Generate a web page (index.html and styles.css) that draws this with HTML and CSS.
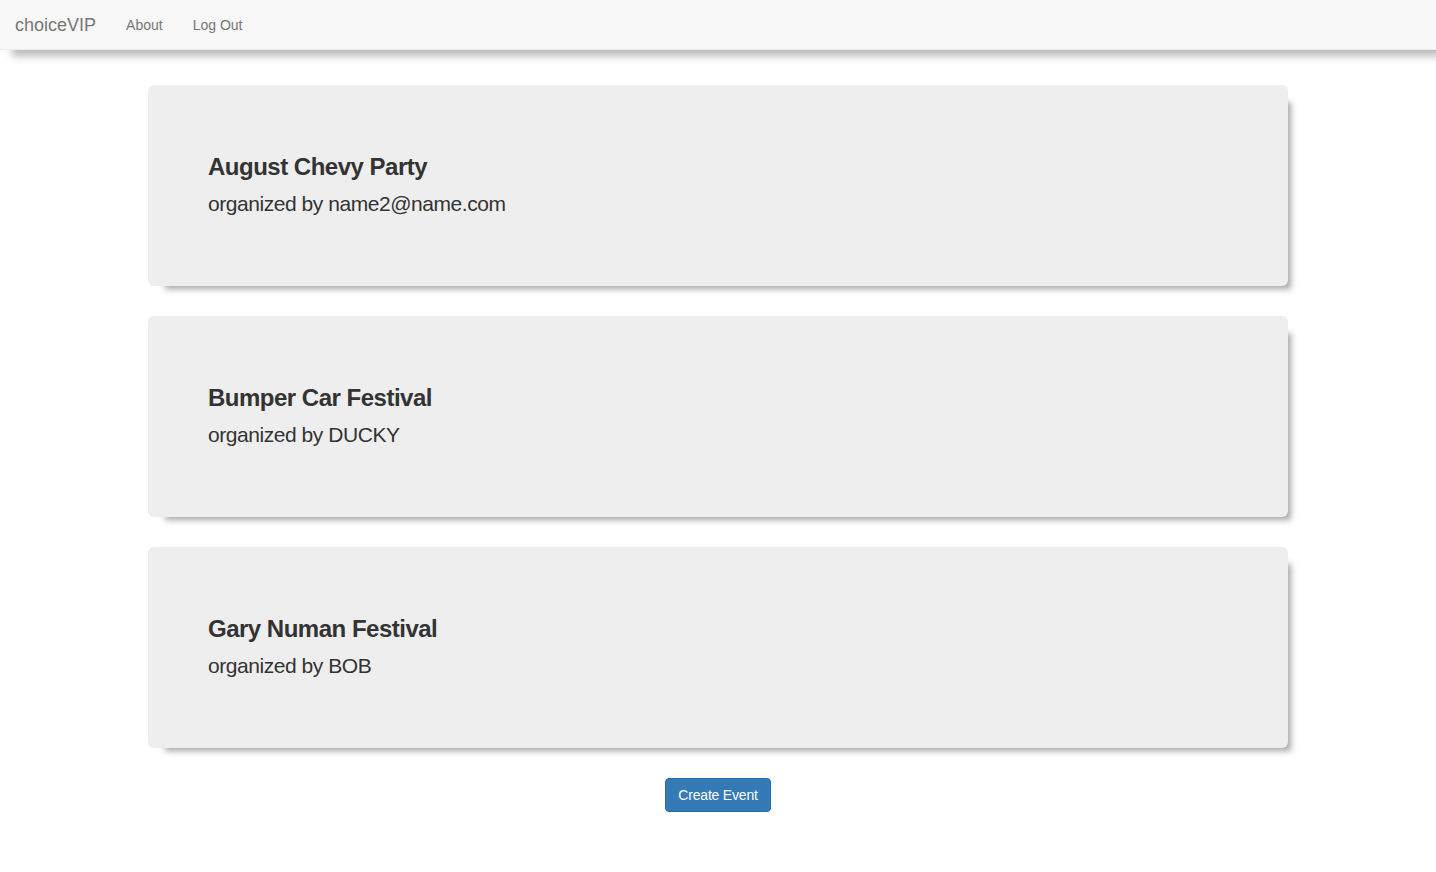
FILE: index.html
```html
<!DOCTYPE html>
<html>
<head>
<meta charset="utf-8">
<title>choiceVIP</title>
<link rel="stylesheet" href="styles.css">
</head>
<body>
<nav class="navbar">
  <a class="brand" href="#">choiceVIP</a>
  <a class="nav-link" href="#">About</a>
  <a class="nav-link" href="#">Log Out</a>
</nav>
<main class="container">
  <div class="card">
    <h3 class="card-title">August Chevy Party</h3>
    <p class="card-sub">organized by name2@name.com</p>
  </div>
  <div class="card">
    <h3 class="card-title">Bumper Car Festival</h3>
    <p class="card-sub">organized by DUCKY</p>
  </div>
  <div class="card">
    <h3 class="card-title">Gary Numan Festival</h3>
    <p class="card-sub">organized by BOB</p>
  </div>
  <div class="actions">
    <button class="btn-primary">Create Event</button>
  </div>
</main>
</body>
</html>
```
FILE: styles.css
```css
* { box-sizing: border-box; }
html, body {
  margin: 0;
  padding: 0;
  background: #fff;
  font-family: "Liberation Sans", Arial, Helvetica, sans-serif;
  color: #333;
  font-size: 14px;
}
.navbar {
  height: 50px;
  background: #f8f8f8;
  border-bottom: 1px solid #ececec;
  display: flex;
  align-items: center;
  box-shadow: 10px 8px 8px -2px rgba(0,0,0,0.28);
}
.navbar a { text-decoration: none; color: #777; }
.brand {
  font-size: 18px;
  padding: 0 15px;
  line-height: 50px;
}
.nav-link {
  font-size: 14px;
  padding: 0 15px;
  line-height: 50px;
}
.container {
  width: 1140px;
  margin: 35px auto 0;
  display: flex;
  flex-direction: column;
  gap: 30px;
}
.card {
  background: #eeeeee;
  border-radius: 6px;
  padding: 48px 60px;
  height: 201px;
  box-shadow: 10px 10px 6px -7px rgba(0,0,0,0.35);
}
.card-title {
  margin: 20px 0 10px;
  font-size: 24px;
  line-height: 27px;
  font-weight: bold;
  letter-spacing: -0.5px;
  color: #333;
}
.card-sub {
  margin: 0;
  font-size: 21px;
  line-height: 28px;
  font-weight: 300;
  letter-spacing: -0.45px;
  color: #333;
}
.actions {
  display: flex;
  justify-content: center;
}
.btn-primary {
  font-family: "Liberation Sans", Arial, Helvetica, sans-serif;
  font-size: 14px;
  line-height: 20px;
  height: 34px;
  padding: 6px 12px;
  white-space: nowrap;
  letter-spacing: -0.2px;
  color: #fff;
  background: #337ab7;
  border: 1px solid #2e6da4;
  border-radius: 4px;
  cursor: pointer;
}
```
